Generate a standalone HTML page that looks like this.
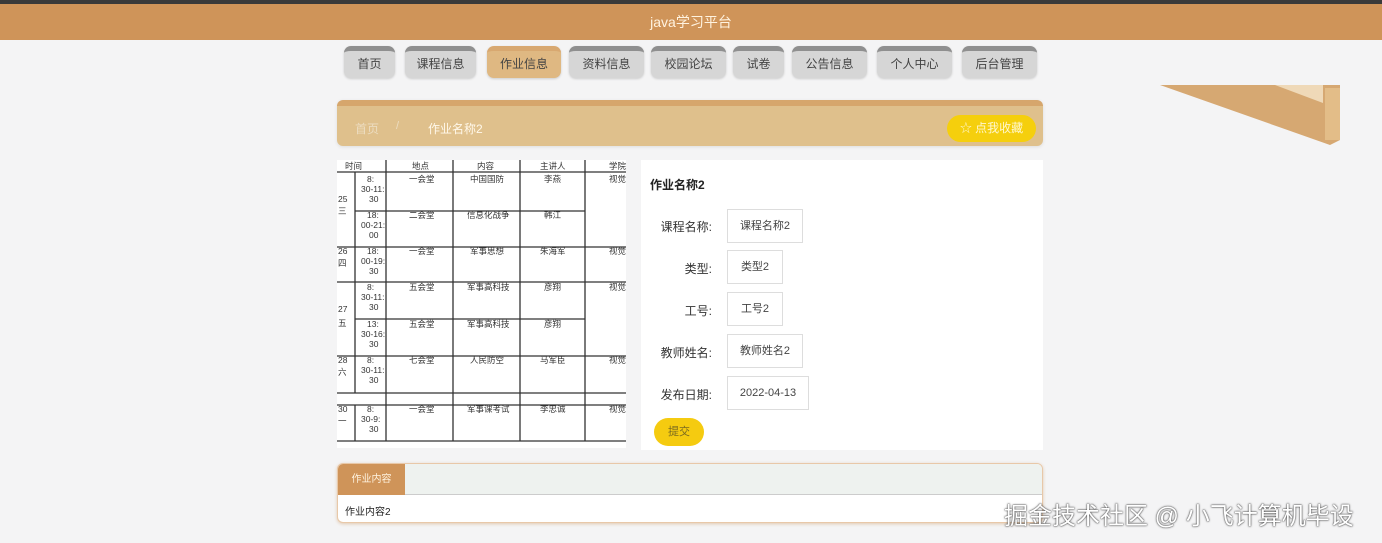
<!DOCTYPE html><html><head><meta charset="utf-8"><style>
*{margin:0;padding:0;box-sizing:border-box}
body{width:1382px;height:543px;background:#f4f4f5;font-family:"Liberation Sans","Noto Sans CJK SC",sans-serif;position:relative;overflow:hidden;font-size:12px;color:#333}
.abs{position:absolute}
.top{left:0;top:0;width:1382px;height:4px;background:#3a3a3a}
.hdr{left:0;top:4px;width:1382px;height:36px;background:#cf9459;color:#fff3e0;text-align:center;line-height:36px;font-size:14px}
.nav{top:46px;height:32px;border-radius:7px;background:#d6d6d6;border-top:5px solid #8f8f8f;text-align:center;line-height:26px;font-size:12px;color:#444;box-shadow:0 1px 2px #ccc}
.nav.on{background:#dfb882;border-top-color:#d8a870}
.bc{left:337px;top:100px;width:706px;height:46px;background:#dfc08c;border-top:6px solid #d6a66c;border-radius:6px;box-shadow:0 1px 3px #ddd}
.form{left:641px;top:160px;width:402px;height:290px;background:#fff}
.lab{width:70px;text-align:right;font-size:12px;color:#333}
.inp{border:1px solid #ddd;height:34px;line-height:32px;text-align:center;font-size:11px;color:#444;background:#fff}
</style></head><body>
<div class="abs top"></div>
<div class="abs hdr">java学习平台</div>
<div class="abs nav" style="left:344px;width:51px">首页</div>
<div class="abs nav" style="left:405px;width:71px">课程信息</div>
<div class="abs nav on" style="left:487px;width:74px">作业信息</div>
<div class="abs nav" style="left:569px;width:75px">资料信息</div>
<div class="abs nav" style="left:651px;width:75px">校园论坛</div>
<div class="abs nav" style="left:733px;width:51px">试卷</div>
<div class="abs nav" style="left:792px;width:75px">公告信息</div>
<div class="abs nav" style="left:877px;width:75px">个人中心</div>
<div class="abs nav" style="left:962px;width:75px">后台管理</div>
<svg class="abs" style="left:1155px;top:85px" width="190" height="65"><polygon points="5,0 185,0 185,55 175,60 5,0" fill="#d6a872"/><polygon points="120,0 168,0 168,18" fill="#efd9b8"/><rect x="170" y="3" width="15" height="52" fill="#e3bd88"/></svg>
<div class="abs bc"></div>
<div class="abs" style="left:355px;top:120px;color:#ecdcc0;font-size:12px">首页</div>
<div class="abs" style="left:396px;top:120px;color:#ecdcc0;font-size:11px">/</div>
<div class="abs" style="left:428px;top:120px;color:#fff8ea;font-size:12px">作业名称2</div>
<div class="abs" style="left:947px;top:115px;width:89px;height:27px;border-radius:14px;background:#f5cf0d;color:#fff7cf;text-align:center;line-height:27px;font-size:12px">☆ 点我收藏</div>
<svg class="abs" style="left:337px;top:160px;background:#fff" width="289" height="288" font-size="8.5" fill="#333" font-family="Liberation Sans,Noto Sans CJK SC,sans-serif">
<g stroke="#333" stroke-width="1.3">
<line x1="0" y1="12" x2="289" y2="12"/>
<line x1="0" y1="87" x2="289" y2="87"/><line x1="0" y1="122" x2="289" y2="122"/>
<line x1="0" y1="196" x2="289" y2="196"/><line x1="0" y1="233" x2="289" y2="233"/><line x1="0" y1="245" x2="289" y2="245"/><line x1="0" y1="281" x2="289" y2="281"/>
<line x1="18" y1="51" x2="248" y2="51"/><line x1="18" y1="159" x2="248" y2="159"/>
<line x1="18" y1="12" x2="18" y2="233"/><line x1="18" y1="245" x2="18" y2="281"/>
<line x1="49" y1="0" x2="49" y2="281"/><line x1="116" y1="0" x2="116" y2="281"/><line x1="183" y1="0" x2="183" y2="281"/><line x1="248" y1="0" x2="248" y2="281"/>
</g>
<text x="8" y="9">时间</text><text x="75" y="9">地点</text><text x="140" y="9">内容</text><text x="203" y="9">主讲人</text><text x="272" y="9">学院</text>
<g><text x="30" y="22">8:</text><text x="24" y="32">30-11:</text><text x="32" y="42">30</text>
<text x="30" y="58">18:</text><text x="24" y="68">00-21:</text><text x="32" y="78">00</text>
<text x="30" y="94">18:</text><text x="24" y="104">00-19:</text><text x="32" y="114">30</text>
<text x="30" y="130">8:</text><text x="24" y="140">30-11:</text><text x="32" y="150">30</text>
<text x="30" y="167">13:</text><text x="24" y="177">30-16:</text><text x="32" y="187">30</text>
<text x="30" y="203">8:</text><text x="24" y="213">30-11:</text><text x="32" y="223">30</text>
<text x="30" y="252">8:</text><text x="24" y="262">30-9:</text><text x="32" y="272">30</text>
<text x="1" y="42">25</text><text x="1" y="54">三</text><text x="1" y="94">26</text><text x="1" y="106">四</text><text x="1" y="152">27</text><text x="1" y="166">五</text><text x="1" y="203">28</text><text x="1" y="215">六</text><text x="1" y="252">30</text><text x="1" y="264">一</text>
<text x="72" y="22">一会堂</text><text x="72" y="58">二会堂</text><text x="72" y="94">一会堂</text><text x="72" y="130">五会堂</text><text x="72" y="167">五会堂</text><text x="72" y="203">七会堂</text><text x="72" y="252">一会堂</text>
<text x="133" y="22">中国国防</text><text x="130" y="58">信息化战争</text><text x="133" y="94">军事思想</text><text x="130" y="130">军事高科技</text><text x="130" y="167">军事高科技</text><text x="133" y="203">人民防空</text><text x="130" y="252">军事课考试</text>
<text x="207" y="22">李燕</text><text x="207" y="58">韩江</text><text x="203" y="94">朱海军</text><text x="207" y="130">彦翔</text><text x="207" y="167">彦翔</text><text x="203" y="203">马军臣</text><text x="203" y="252">李忠诚</text>
<text x="272" y="22">视觉</text><text x="272" y="94">视觉</text><text x="272" y="130">视觉</text><text x="272" y="203">视觉</text><text x="272" y="252">视觉</text></g>
</svg>
<div class="abs form"></div>
<div class="abs" style="left:650px;top:176px;font-weight:bold;font-size:12px;color:#222">作业名称2</div>
<div class="abs lab" style="left:642px;top:218px">课程名称:</div><div class="abs inp" style="left:727px;top:209px;width:76px">课程名称2</div>
<div class="abs lab" style="left:642px;top:260px">类型:</div><div class="abs inp" style="left:727px;top:250px;width:56px">类型2</div>
<div class="abs lab" style="left:642px;top:302px">工号:</div><div class="abs inp" style="left:727px;top:292px;width:56px">工号2</div>
<div class="abs lab" style="left:642px;top:344px">教师姓名:</div><div class="abs inp" style="left:727px;top:334px;width:76px">教师姓名2</div>
<div class="abs lab" style="left:642px;top:386px">发布日期:</div><div class="abs inp" style="left:727px;top:376px;width:82px">2022-04-13</div>
<div class="abs" style="left:654px;top:418px;width:50px;height:28px;border-radius:14px;background:#f5cb10;color:#7a6a20;text-align:center;line-height:28px;font-size:11px">提交</div>
<div class="abs" style="left:337px;top:463px;width:706px;height:60px;border:1px solid #e8c8a8;border-radius:6px;background:#fff;overflow:hidden;box-shadow:0 1px 3px #e0c8b0">
<div style="height:31px;background:#eef2ef;border-bottom:1px solid #ccc"><div style="width:67px;height:31px;background:#cf9459;color:#fff3e0;line-height:31px;text-align:center;font-size:10px">作业内容</div></div>
<div style="padding:8px 7px;font-size:10px;color:#222">作业内容2</div></div>
<div class="abs" style="left:1004px;top:496px;font-size:24px;color:#fff;text-shadow:0 0 2px #444,0 0 1px #222">掘金技术社区 @ 小飞计算机毕设</div>
</body></html>
